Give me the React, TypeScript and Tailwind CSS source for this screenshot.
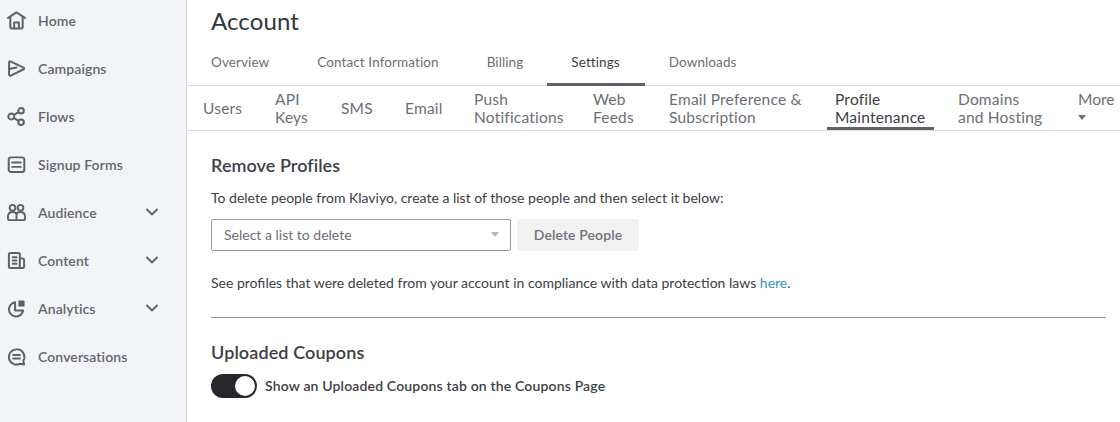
import React from "react";
import { ChevronDown } from "lucide-react";

const font = "font-['Lato','Liberation_Sans',sans-serif]";

const HomeIcon = () => (
  <svg viewBox="0 0 20 20" className="h-[19px] w-[19px]" fill="none" stroke="currentColor" strokeWidth="2.100" strokeLinecap="round" strokeLinejoin="round">
    <path d="M1.200 7.200 10 1.500l8.800 5.700" />
    <path d="M3.500 6.200V17a1.500 1.500 0 0 0 1.500 1.500h10a1.500 1.500 0 0 0 1.500-1.500V6.200" />
    <path d="M7.500 18v-6h5v6" />
  </svg>
);

const CampaignIcon = () => (
  <svg viewBox="0 0 20 20" className="h-[19px] w-[19px]" fill="none" stroke="currentColor" strokeWidth="2.100" strokeLinecap="round" strokeLinejoin="round">
    <path d="M3.500 2.500 17.500 9a1 1 0 0 1 0 1.800L4 17.500c-1 .4-1.800-.2-1.800-1.200V3.300c0-.7.700-1 1.300-.8Z" />
    <path d="M2.500 10.500 10 9" />
  </svg>
);

const FlowIcon = () => (
  <svg viewBox="0 0 20 20" className="h-[19px] w-[19px]" fill="none" stroke="currentColor" strokeWidth="2.100">
    <circle cx="14.800" cy="4" r="2.900" />
    <circle cx="4.500" cy="10" r="3.100" />
    <circle cx="14.800" cy="16" r="2.900" />
    <path d="m7 8.500 5-3M7 11.500l5 3" />
  </svg>
);

const FormIcon = () => (
  <svg viewBox="0 0 20 20" className="h-[19px] w-[19px]" fill="none" stroke="currentColor" strokeWidth="2.100" strokeLinecap="round">
    <rect x="1.800" y="2.500" width="16.400" height="15.500" rx="2.500" />
    <path d="M5.500 8h9M5.500 12.500h9" />
  </svg>
);

const AudienceIcon = () => (
  <svg viewBox="0 0 20 20" className="h-[19px] w-[19px]" fill="none" stroke="currentColor" strokeWidth="2" strokeLinejoin="round">
    <circle cx="5.800" cy="5" r="3" />
    <circle cx="14.200" cy="5" r="3" />
    <path d="M1 14.500c0-3 2-5 5-5 1.800 0 3.200.6 4 1.800.8-1.200 2.200-1.800 4-1.800 3 0 5 2 5 5v1.500a2 2 0 0 1-2 2H3a2 2 0 0 1-2-2Z" />
    <path d="M10 11.300V18" />
  </svg>
);

const ContentIcon = () => (
  <svg viewBox="0 0 20 20" className="h-[19px] w-[19px]" fill="none" stroke="currentColor" strokeWidth="2.100" strokeLinecap="round" strokeLinejoin="round">
    <path d="M13.500 18H3.500A1.500 1.500 0 0 1 2 16.500v-13A1.500 1.500 0 0 1 3.500 2h8.500a1.500 1.500 0 0 1 1.500 1.500V18Z" />
    <path d="M13.500 8h3a1.500 1.500 0 0 1 1.500 1.500v7a1.500 1.500 0 0 1-1.500 1.500h-3" />
    <path d="M6 6.500h4M6 10h4M6 13.500h4" />
  </svg>
);

const AnalyticsIcon = () => (
  <svg viewBox="0 0 20 20" className="h-[19px] w-[19px]" fill="none" stroke="currentColor" strokeWidth="2.100" strokeLinecap="round" strokeLinejoin="round">
    <path d="M8.500 3.500a7.500 7.500 0 1 0 8.500 8.500H8.500Z" />
    <path d="M12 1.500h5.500a1 1 0 0 1 1 1V8H12Z" fill="currentColor" stroke="none" />
  </svg>
);

const ChatIcon = () => (
  <svg viewBox="0 0 20 20" className="h-[19px] w-[19px]" fill="none" stroke="currentColor" strokeWidth="2.100" strokeLinecap="round" strokeLinejoin="round">
    <path d="M10 2.500a8 8 0 1 0 3.500 15.200l4.500.8-.8-4A8 8 0 0 0 10 2.500Z" />
    <path d="M6.500 8.500h7M6.500 12h7" />
  </svg>
);

const navItems = [
  { label: "Home", icon: <HomeIcon /> },
  { label: "Campaigns", icon: <CampaignIcon /> },
  { label: "Flows", icon: <FlowIcon /> },
  { label: "Signup Forms", icon: <FormIcon /> },
  { label: "Audience", icon: <AudienceIcon />, arrow: true },
  { label: "Content", icon: <ContentIcon />, arrow: true },
  { label: "Analytics", icon: <AnalyticsIcon />, arrow: true },
  { label: "Conversations", icon: <ChatIcon /> },
];

const topTabs = ["Overview", "Contact Information", "Billing", "Settings", "Downloads"];

const subTabs = [
  { lines: ["Users"], width: "w-[56px]" },
  { lines: ["API", "Keys"], width: "w-[50px]" },
  { lines: ["SMS"], width: "w-[48px]" },
  { lines: ["Email"], width: "w-[53px]" },
  { lines: ["Push", "Notifications"], width: "w-[103px]" },
  { lines: ["Web", "Feeds"], width: "w-[60px]" },
  { lines: ["Email Preference &", "Subscription"], width: "w-[150px]" },
  { lines: ["Profile", "Maintenance"], width: "w-[107px]" },
  { lines: ["Domains", "and Hosting"], width: "w-[100px]" },
];

export default function App() {
  return (
    <div className={`${font} flex h-[422px] w-[1120px] overflow-hidden bg-white`}>
      {/* Sidebar */}
      <aside className="h-full w-[187px] shrink-0 border-r border-[#d9dbde] bg-[#f2f4f7]">
        <nav className="-mt-[4px]">
          {navItems.map((item) => (
            <div key={item.label} className="flex h-12 items-center pl-[7px] pr-[24px] text-[#5d6269]">
              <span className="flex w-[31px] shrink-0">{item.icon}</span>
              <span className="flex-1 text-[14px] font-semibold tracking-[0.1px] text-[#62666d]">{item.label}</span>
              {item.arrow && <ChevronDown size={20} strokeWidth={2.3} />}
            </div>
          ))}
        </nav>
      </aside>

      <main className="min-w-0 flex-1">
        <h1 className="pl-6 pt-[6px] text-[24px] font-normal leading-[30px] tracking-[0.1px] text-[#32363b]">Account</h1>

        {/* Account tabs */}
        <div className="mt-[7px] flex h-[43px] border-b border-[#dcdde0]">
          {topTabs.map((tab) => (
            <div
              key={tab}
              className={`-mb-px flex items-center px-6 text-[13.500px] tracking-[0.1px] ${
                tab === "Settings" ? "border-b-[3px] border-[#5d6369] pb-[1px] pr-[25px] text-[#3c4046]" : "pb-[4px] text-[#6b6f75]"
              }`}
            >
              {tab}
            </div>
          ))}
        </div>

        {/* Settings tabs */}
        <div className="flex h-[45px] gap-4 overflow-hidden border-b border-[#dcdde0] pl-2 text-[15.500px] leading-[18px] tracking-[0.2px]">
          {subTabs.map((tab) => {
            const active = tab.lines[0] === "Profile";
            return (
              <div
                key={tab.lines[0]}
                className={`-mb-px flex shrink-0 flex-col justify-center whitespace-nowrap px-2 ${tab.width} ${
                  active ? "border-b-4 border-[#5d6369] pt-[3px] text-[#3c4046]" : "pb-[1px] text-[#6b6f75]"
                }`}
              >
                {tab.lines.map((line) => (
                  <span key={line}>{line}</span>
                ))}
              </div>
            );
          })}
          <div className="flex flex-col justify-center pb-[1px] pl-3 tracking-[0px] text-[#6b6f75]">
            <span>More</span>
            <span className="mb-[5px] mt-[7px] h-0 w-0 border-x-[4px] border-t-[5px] border-x-transparent border-t-[#6b6f75]" />
          </div>
        </div>

        {/* Settings body */}
        <section className="pl-6 pr-[14px]">
          <h2 className="mt-[24px] text-[18px] font-semibold leading-5 tracking-[0.05px] text-[#3c4046]">Remove Profiles</h2>
          <p className="mt-[13px] text-[14px] leading-5 text-[#3c4046]">
            To delete people from Klaviyo, create a list of those people and then select it below:
          </p>
          <div className="mt-[11px] flex gap-[6px]">
            <div className="flex h-8 w-[300px] items-center justify-between rounded-[2px] border border-[#9b9b9b] px-3 pb-[2px] text-[14px] text-[#6d7076]">
              <span>Select a list to delete</span>
              <span className="mr-[-1px] h-0 w-0 border-x-[4px] border-t-[5px] border-x-transparent border-t-[#b5b5b5]" />
            </div>
            <button className="h-8 w-[122px] rounded-[3px] bg-[#f2f2f3] pb-[2px] text-[14px] font-semibold tracking-[0.1px] text-[#6f7278]">Delete People</button>
          </div>
          <p className="mt-[22px] text-[14px] leading-5 text-[#3c4046]">
            See profiles that were deleted from your account in compliance with data protection laws{" "}
            <span className="text-[#2f96c8]">here</span>.
          </p>
          <div className="mt-[24px] border-t border-[#9b9b9b]" />
          <h2 className="mt-[24px] text-[18px] font-semibold leading-5 tracking-[0.1px] text-[#3c4046]">Uploaded Coupons</h2>
          <div className="mt-[12px] flex items-center gap-2">
            <span className="flex h-6 w-[46px] items-center justify-end rounded-full bg-[#25272b] pr-[2px]">
              <span className="h-5 w-5 rounded-full bg-white" />
            </span>
            <span className="pb-[2px] text-[14px] font-semibold tracking-[0.16px] text-[#3c4046]">Show an Uploaded Coupons tab on the Coupons Page</span>
          </div>
        </section>
      </main>
    </div>
  );
}
